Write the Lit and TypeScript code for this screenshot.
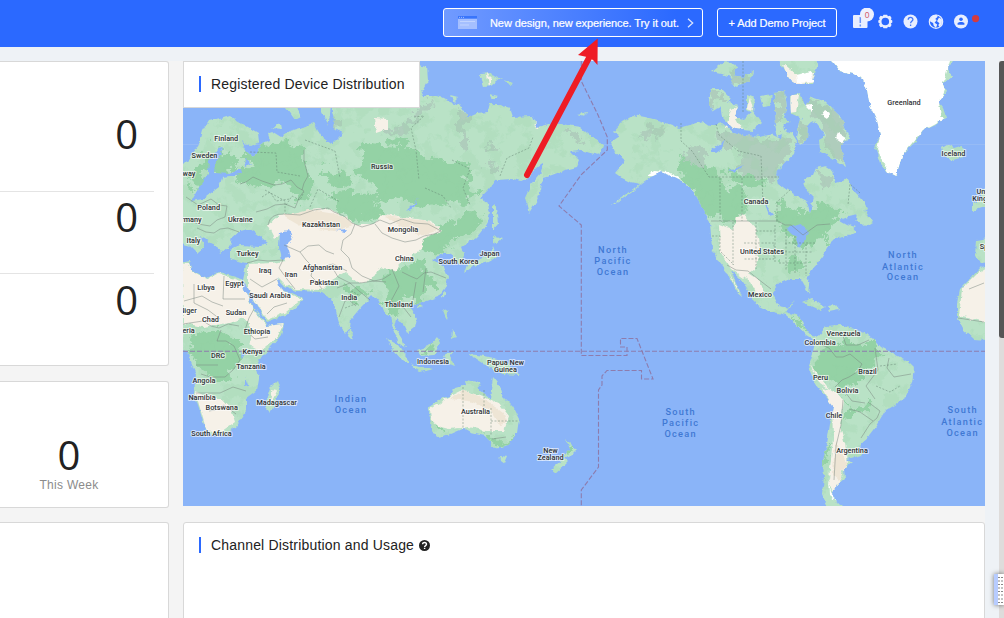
import { LitElement, html, css, svg } from "lit";
import { customElement, property } from "lit/decorators.js";

type Label = [string, number, number];

const COUNTRIES: Label[] = [
  ["Finland", 226.3, 140.7], ["Sweden", 204.5, 157.7], ["Norway", 183, 175.7],
  ["Poland", 208.7, 209.7], ["Germany", 187, 222], ["Ukraine", 240.3, 222],
  ["Italy", 193.5, 243.2], ["Turkey", 247.5, 256], ["Russia", 382, 169.3],
  ["Kazakhstan", 321, 226.8], ["Mongolia", 403, 231.7], ["China", 404.3, 261],
  ["South Korea", 458.5, 264], ["Japan", 489.5, 256], ["Iraq", 265, 273],
  ["Iran", 291, 277.3], ["Afghanistan", 322.5, 270], ["Pakistan", 324, 284.5],
  ["Libya", 206, 289.5], ["Egypt", 234.5, 286], ["Saudi Arabia", 270, 298.3],
  ["India", 349.3, 300], ["Thailand", 398.7, 307], ["Niger", 188, 313],
  ["Chad", 210.5, 321.5], ["Sudan", 236, 314.5], ["Nigeria", 183, 332.5],
  ["Ethiopia", 257, 334], ["DRC", 218, 358], ["Kenya", 252.5, 353.5],
  ["Tanzania", 251, 369], ["Angola", 204, 383], ["Namibia", 202, 400],
  ["Botswana", 221.7, 409.5], ["Madagascar", 276.7, 404.5],
  ["South Africa", 211.5, 436.3], ["Indonesia", 433, 364],
  ["Papua New", 505.5, 365], ["Guinea", 505.5, 372], ["Australia", 475.5, 413.5],
  ["New", 550.5, 452.5], ["Zealand", 550.5, 460], ["Greenland", 904, 105],
  ["Iceland", 953.5, 155.5], ["Canada", 756, 203.5], ["United States", 762, 254.3],
  ["Mexico", 760, 297.3], ["Venezuela", 843.5, 335.5], ["Colombia", 820, 345.3],
  ["Brazil", 867.5, 373.7], ["Peru", 820.5, 379.5], ["Bolivia", 847.5, 393.3],
  ["Chile", 834, 418.3], ["Argentina", 852, 452.7], ["United", 987, 193.5],
  ["Kingdom", 987, 201], ["Spain", 989, 248.5],
];

const OCEANS: Label[] = [
  ["North", 613, 253.3], ["Pacific", 613, 264], ["Ocean", 613, 275.3],
  ["North", 903, 258.3], ["Atlantic", 903, 269.5], ["Ocean", 903, 280.3],
  ["Indian", 351, 402], ["Ocean", 351, 412.5],
  ["South", 680.7, 415], ["Pacific", 680.7, 426], ["Ocean", 680.7, 437],
  ["South", 962.7, 413.3], ["Atlantic", 962.3, 425], ["Ocean", 962.7, 435.5],
];

const LAND = [
  /* Eurasia */
  "M180 168L190 158 200 142 203 131 209 121 220 118 230 115 236 120 248 127 258 133 259 142 251 146 242 142 247 151 254 157 259 148 261 144 270 140 268 134 273 132 281 137 290 131 304 127 314 123 318 131 323 139 330 144 336 138 330 128 322 112 322 90 340 80 420 88 424 96 438 96 450 102 460 105 468 117 477 113 488 112 490 104 497 104 510 108 513 117 532 116 537 127 549 124 561 124 580 127 592 137 603 145 600 155 590 153 581 150 571 151 580 160 577 167 565 170 552 175 543 178 541 190 537 200 529 213 525 197 531 184 541 172 543 163 536 168 528 178 521 181 513 179 495 180 488 190 480 198 488 203 490 213 487 224 477 237 467 243 461 247 464 255 461 265 455 261 451 253 443 253 437 257 433 260 444 267 448 277 446 286 438 297 424 302 410 306 417 318 415 327 407 333 404 326 397 318 395 327 402 338 405 347 398 343 393 329 390 316 383 312 379 302 373 295 362 306 351 319 350 328 345 334 339 322 335 307 332 299 322 292 296 291 284 286 277 278 281 290 292 293 303 298 299 305 288 314 267 322 259 309 249 290 243 280 245 271 246 263 238 261 230 258 230 250 239 246 260 247 268 242 260 236 253 234 243 235 235 240 229 246 221 253 218 246 211 243 205 238 200 236 205 247 198 253 191 246 180 243Z",
  /* Africa */
  "M180 263L190 261 192 270 206 278 218 272 232 276 242 279 244 289 254 309 264 321 267 326 284 324 281 335 272 346 262 356 256 366 259 378 257 390 246 398 246 411 237 426 225 435 209 435 204 425 199 408 194 393 196 374 190 360 187 352 180 350Z",
  "M270 388L278 380 280 386 275 404 270 413 266 407 267 397Z",
  /* Western Africa at the right edge */
  "M990 264L981 267 971 278 960 289 957 303 957 318 963 329 974 339 990 340Z",
  "M990 238L976 240 975 257 981 263 990 262Z",
  "M990 187L979 190 982 199 973 203 973 211 982 208 990 206Z",
  /* Greenland */
  "M828 52L832 61 840 71 853 74 863 79 867 90 870 106 877 121 880 135 875 148 880 163 888 172 896 176 903 154 915 142 922 131 937 124 946 117 943 108 938 102 947 91 943 84 952 76 948 68 953 61 954 52Z",
  "M942 147L947 144 954 147 961 145 966 152 962 158 952 161 944 157Z",
  /* North America */
  "M611 142L620 136 613 132 622 122 634 115 645 117 657 120 669 124 680 128 690 125 702 121 710 126 722 123 733 132 745 135 760 137 771 134 781 139 785 130 792 133 797 141 794 154 784 163 777 174 779 184 787 190 799 197 807 201 810 213 814 198 806 190 804 180 814 175 817 168 825 166 833 171 836 183 843 181 847 178 853 190 862 199 867 209 860 214 848 217 840 220 847 224 856 227 846 234 836 238 829 245 823 256 812 270 806 277 810 285 809 294 805 286 801 279 790 279 778 284 772 293 779 306 790 308 795 299 786 312 799 316 804 327 812 335 819 336 816 341 806 335 797 325 786 315 770 311 756 304 749 292 740 279 731 271 742 296 735 290 727 272 719 262 712 249 710 222 705 214 699 201 694 192 684 182 674 177 661 172 649 178 642 183 634 191 616 203 611 205 633 190 640 184 630 182 622 178 615 173 621 166 625 160 615 152Z",
  "M708 101L711 89 722 89 731 98 723 106 713 112ZM722 117L720 102 729 102 738 106 734 116 744 119 753 111 762 123 752 131 734 129ZM712 72L725 61 737 67 733 78 722 74ZM728 75L744 77 753 70 750 82 736 87ZM747 95L755 98 753 113 747 110ZM760 97L772 95 770 106 763 107ZM773 52L784 70 794 84 812 84 818 64 814 52ZM774 93L785 91 787 109 784 119 791 122 776 124ZM790 96L800 93 808 111 802 119 791 114ZM811 97L824 101 840 116 850 139 840 145 846 167 830 157 820 151 819 139 826 135 815 121 802 128 804 109Z",
  "M800 118L808 122 807 139 800 145 796 136ZM774 125L782 121 785 134 777 137Z",
  "M857 213L866 211 873 222 865 227 856 219ZM835 233L851 226 856 232 844 238Z",
  "M802 302L812 298 825 307 819 310ZM827 306L836 305 839 309 829 311Z",
  /* South America */
  "M817 336L826 326 839 325 857 330 872 337 881 347 894 354 906 360 914 368 912 383 905 398 895 405 885 411 876 426 867 438 860 444 862 455 847 459 852 463 844 469 845 478 837 485 832 494 836 502 845 507 828 508 822 494 824 478 823 461 827 444 830 424 833 407 823 394 815 384 808 366 813 351Z",
  /* Australia and New Zealand */
  "M429 407L441 399 450 396 455 388 466 385 465 380 479 382 480 390 490 398 493 377 500 386 503 397 513 407 519 419 517 433 507 446 492 448 485 435 471 432 464 428 450 434 437 437 433 431 428 413Z",
  "M500 455L508 456 505 463 501 460ZM566 439L573 446 577 449 569 457 561 459 570 449ZM564 459L567 462 555 473 551 470Z",
  /* Islands */
  "M386 338L398 345 410 362 404 362 392 349ZM410 364L423 367 433 369 420 372ZM417 350L429 346 437 337 440 343 434 355 420 356ZM443 356L455 350 450 356 455 366 447 363ZM468 354L485 356 502 360 520 375 503 374 490 368ZM442 308L448 312 447 320ZM452 330L457 337 451 339ZM350 329L354 334 352 340 348 336ZM418 305L422 307 417 309ZM443 292L446 294 443 299Z",
  "M493 236L503 239 497 244 493 243ZM493 246L497 257 488 262 474 266 464 273 467 265 480 258 491 254ZM493 204L496 207 498 224 493 230Z",
  "M480 74L491 73 495 79 502 77 492 85 484 86ZM489 94L497 96 492 99ZM503 80L513 83 509 86ZM450 96L458 98 454 102ZM578 114L587 112 585 116Z",
  "M415 64L427 66 428 80 423 90 415 92ZM284 104L296 106 301 117 295 120ZM272 128L280 124 281 129Z",
];

const FOREST = [
  "M186 180L198 164 211 147 223 151 219 164 205 176 199 190 191 189ZM216 158L230 155 237 164 226 176 216 174ZM239 150L262 145 290 143 304 149 304 167 316 181 303 205 285 181 264 185 243 184 236 176 252 165Z",
  "M365 142L405 144 422 157 450 162 473 165 465 178 475 190 463 207 438 202 416 204 398 197 382 207 372 186 354 175Z",
  "M407 241L435 230 458 221 468 210 482 218 472 230 454 242 432 252ZM384 270L400 266 426 264 436 284 424 298 405 298 394 316 383 300Z",
  "M188 354L196 333 218 329 229 342 239 339 240 370 226 380 208 377 192 365ZM340 288L355 285 370 293 355 302Z",
  "M679 155L705 163 721 181 747 193 748 220 717 221 703 211 693 194 681 183ZM778 203L807 211 832 205 846 214 827 229 820 242 805 250 788 240 778 223ZM722 170L760 176 764 185 733 181Z",
  "M816 350L835 342 856 345 876 345 884 354 873 367 862 376 849 387 828 382 817 370ZM843 398L850 407 872 404 871 411 846 415ZM430 345L436 343 434 353 420 354Z",
  "M483 435L503 443 515 433 508 445 491 447ZM434 423L447 430 435 435ZM824 440L829 442 828 465 822 474ZM562 448L575 447 566 456ZM789 310L800 319 807 332 799 326Z",
  "M322 168L345 172 352 182 338 188 326 182ZM330 196L352 190 374 196 384 210 372 222 352 220 338 208ZM785 262L800 256 806 264 800 274 788 272Z",
];

const ARID = [
  "M268 225L278 216 296 214 310 210 327 208 342 215 355 224 374 224 381 215 402 217 432 221 441 231 423 239 421 250 402 262 394 271 379 268 372 280 358 283 345 272 333 279 322 290 296 289 286 285 278 277 282 290 302 299 286 312 268 320 259 308 248 288 248 264 272 263 285 261 283 245 286 230 275 239Z",
  "M182 264L190 263 192 271 207 279 218 273 241 281 253 309 266 326 284 323 277 338 261 351 249 345 254 331 244 318 229 323 203 327 183 323Z",
  "M195 391L205 396 222 399 231 409 235 422 222 431 207 432ZM272 390L277 391 269 407Z",
  "M989 266L979 272 962 289 959 316 989 323Z",
  "M430 409L445 399 463 390 486 398 499 403 509 416 504 431 486 431 469 427 450 429 438 426 431 420Z",
  "M719 224L733 229 736 217 744 215 756 229 760 249 755 269 744 278 731 269 720 253ZM743 270L760 281 766 298 755 292ZM729 272L740 294 735 287ZM731 110L744 102 747 112 736 119 742 130 725 128ZM750 97L753 110 747 108ZM783 63L797 75 814 74 817 82 789 86ZM791 95L799 95 796 112 789 113Z",
  "M822 388L836 392 844 401 840 426 845 444 848 462 840 478 841 488 833 495 829 480 833 438 832 408ZM809 362L818 376 829 390 820 384Z",
  "M374 118L388 119 388 129 376 133ZM534 126L536 121 540 129ZM487 73L492 78 489 87Z",
];

const TUNDRA = [
  "M717 129L738 132 761 138 783 138 793 141 786 158 778 174 772 179 741 175 740 155 720 144ZM641 131L656 127 671 128 655 136 637 140ZM680 155L701 151 708 163 701 169ZM817 169L833 173 834 184 818 186ZM804 100L825 102 845 120 850 142 846 164 822 152 830 136 815 120ZM709 90L728 98 712 109ZM728 75L750 72 748 84 736 87ZM774 93L785 91 787 109 784 119 776 124ZM796 118L808 122 807 139 800 145Z",
  "M460 111L468 117 464 132 468 150 460 147ZM382 132L400 127 415 109 437 98 416 119 401 140ZM489 164L499 167 493 171 486 170ZM566 128L584 138 583 147 569 135ZM484 137L500 155 492 151ZM330 113L340 130 333 137Z",
];

const BORDERS =
  "M268 225Q270 213 285 214L300 215 314 210 328 208 334 212 344 216 352 223 362 227 372 224 380 220 390 224 402 219 414 223 428 224 441 231M375 224L382 233 392 238 405 242 416 240 424 236 434 234 441 231M355 224L351 234 343 240 341 250 349 258 352 268 362 276 374 281 386 282M284 245L300 252 308 246 319 245 326 251 334 254M300 252L306 260 313 267 322 267 333 264 347 271M247 263L258 260 268 261 283 260 279 268 287 279 295 289M313 267L311 276 316 281 322 289M250 279L262 287 277 279M267 314L274 307 287 303M224 276L223 299H245M194 284V303L208 310 220 319M184 301L202 296 212 302 223 306M183 324L203 321 211 326 219 328 228 324 239 326M254 309L249 318 245 330 255 339 268 337M221 330L217 341 226 341 234 346 240 360 233 370 225 377 210 377 201 374M196 365L218 365M196 393H220L233 387 246 391M209 411L215 410 224 405 236 414M186 197L198 205 211 199 219 205 227 206 225 217 217 220 210 226 198 224 188 220M197 228L206 232 214 233 220 229 228 228 239 232M240 184L246 182 253 177 262 181 274 185 282 184 291 180 297 187 304 191 299 198 295 208 285 204 275 205 267 209 256 212M304 150L304 160 308 176 304 183 302 190M332 267L338 277 350 283 360 283 374 281 383 279 391 274M337 288L350 283 359 291 370 300M356 306L349 300 345 301 342 309 339 317M392 269L399 286 391 301 404 308 411 317M402 272L410 276 417 279 424 273 431 272 446 278M416 282L413 300M426 268L423 292M711 221H778L785 225 791 225 803 235 817 225 830 224M727 265L736 270 748 271 758 279 771 289M822 345L829 348 836 357 843 357 850 354 862 364 857 372 849 377 842 380 835 387M842 333L846 345 858 345 869 340M838 389L845 392 852 401 865 403M868 402L880 411 877 418 870 424 861 438M843 400L841 425 836 446 834 480M849 409L860 412 873 421M875 348L878 370 866 386 875 399M889 358L887 368 894 377 911 374M969 289L984 283M958 318L984 322M492 439L506 437";

const STATES =
  "M681 123V141L692 151 709 177H779M720 178V221M742 178V221M762 178L763 205M716 124L719 135 738 151 761 156 762 178M743 61V113M777 221V202L790 190M756 222V269M712 236H720V251L734 265M733 222V265M744 243H774V259H744M756 231H775M775 225V263M786 229V270M795 236V274M806 244V276M463 387V428M484 390V408M491 408V435M491 421H518M785 243H815M778 252H812M779 263H807M305 140L335 151 340 178M414 117L424 116 411 128 416 150 419 180M452 160L470 169 463 188 470 205M500 176L507 158 529 148 533 137M265 190L285 201 285 213M310 207L318 189 340 202M425 188L443 196 451 208M860 193L850 184 848 205M250 152L276 153 277 172 300 176M262 197L270 192 276 201 290 199M286 205L292 196 300 200 304 192M345 300L352 291 360 296M345 308L358 303M880 366L897 364M876 386L890 392 900 386";

@customElement("world-map")
export class WorldMap extends LitElement {
  static styles = css`
    :host { display: block; }
    svg { display: block; width: 802px; height: 445px; background: #8ab4f8; }
    .country {
      font: 500 7.3px Roboto, sans-serif; fill: #303336; stroke: #fff; stroke-width: 2.2px;
      stroke-opacity: .6; paint-order: stroke; stroke-linejoin: round; text-anchor: middle;
    }
    .ocean {
      font: 500 9.2px Roboto, sans-serif; fill: #3f78d3; letter-spacing: 1.3px; text-anchor: middle;
    }
  `;
  render() {
    return html`<svg viewBox="183 61 802 445">
      <defs>
        <filter id="coast" filterUnits="userSpaceOnUse" x="170" y="40" width="830" height="480">
          <feTurbulence type="fractalNoise" baseFrequency=".16" numOctaves="3" seed="5" result="n"></feTurbulence>
          <feDisplacementMap in="SourceGraphic" in2="n" scale="5" xChannelSelector="R" yChannelSelector="G"></feDisplacementMap>
        </filter>
        <filter id="patch" filterUnits="userSpaceOnUse" x="170" y="40" width="830" height="480">
          <feTurbulence type="fractalNoise" baseFrequency=".09" numOctaves="4" seed="9" result="n"></feTurbulence>
          <feDisplacementMap in="SourceGraphic" in2="n" scale="24" xChannelSelector="R" yChannelSelector="G"></feDisplacementMap>
        </filter>
        <filter id="speckle" filterUnits="userSpaceOnUse" x="170" y="40" width="830" height="480">
          <feTurbulence type="fractalNoise" baseFrequency=".06" numOctaves="5" seed="14"></feTurbulence>
          <feColorMatrix values="0 0 0 0 .3  0 0 0 0 .64  0 0 0 0 .38  12 0 0 0 -6.2"></feColorMatrix>
        </filter>
        <clipPath id="land">${LAND.map((d) => svg`<path d=${d}></path>`)}</clipPath>
      </defs>
      <path d="M183 144.500H985" stroke="#9dbff5" stroke-width=".6"></path>
      <g filter="url(#coast)">
        ${LAND.map((d) => svg`<path d=${d} fill="#b9e2c6"></path>`)}
        <g clip-path="url(#land)">
          <g filter="url(#patch)">
            ${FOREST.map((d) => svg`<path d=${d} fill="#94d2a5"></path>`)}
            ${TUNDRA.map((d) => svg`<path d=${d} fill="#afcdbc"></path>`)}
          </g>
          <rect x="183" y="61" width="802" height="445" filter="url(#speckle)" opacity=".2"></rect>
          ${ARID.map((d) => svg`<path d=${d} fill="#f6f1e8"></path>`)}
          <path fill="#eee5d5" d="M283 216L310 210 342 215 353 225 335 231 302 227ZM384 216L430 221 439 230 420 236 400 226ZM450 399L464 390 486 400 507 416 501 427 490 410 470 401ZM835 440L847 462 839 480 833 475Z"></path>
          <path fill="#fff" d="M828 50L832 61 840 71 853 74 863 79 868 106 880 135 877 150 888 172 896 176 903 154 922 131 944 119 939 105 945 90 943 84 950 61 954 50Z"></path>
          <path fill="#fff" d="M647 176L654 171 668 172 681 179 695 193 696 196 684 186 668 177ZM796 75L811 72 814 82 797 83ZM825 110L830 113 827 119 821 115ZM838 133L847 139 843 143 836 138ZM828 478L831 492 837 502 829 495ZM805 105L812 104 812 112Z"></path>
        </g>
      </g>
      <g fill="#8ab4f8" filter="url(#coast)">
        <path d="M201 184L208 174 209 161 218 149 224 148 216 161 215 173 229 174 241 169 242 173 230 177 222 178 219 187 203 199 191 201Z"></path>
        <path d="M230 240L240 231 249 229 264 239 267 245 248 243 235 248ZM280 232L289 230 293 239 287 245 291 258 282 259 279 247Z"></path>
        <path d="M331 106L335 118 333 128 343 133 333 143 327 142 328 129ZM406 211L416 201 418 197 414 208ZM336 230L347 229 345 232ZM711 150L724 141 722 149 716 153ZM729 171L744 165 735 173ZM765 204L773 214 769 215ZM786 228L801 224 809 234 799 248 795 236ZM240 352L245 354 242 359ZM245 377L248 385 245 386ZM244 157L251 164 246 167Z"></path>
      </g>
      <path d=${BORDERS} fill="none" stroke="#78857f" stroke-opacity=".7" stroke-width=".7"></path>
      <path d=${STATES} fill="none" stroke="#5f7b6c" stroke-opacity=".65" stroke-width=".7" stroke-dasharray="2 1.500"></path>
      <path fill="none" stroke="#8d7cad" stroke-width="1.100" stroke-dasharray="5 2" d="M183 351.300H985M581.300 61V81L598 115 607.300 137V150L581 175 559 206 581.300 225V355.500H627V347H620.500V338.500H637L653 379H641.500V370.500H607L602 376V385L598.500 390V467L581.300 490V506"></path>
      ${COUNTRIES.map(([t, x, y]) => svg`<text class="country" x=${x} y=${y}>${t}</text>`)}
      ${OCEANS.map(([t, x, y]) => svg`<text class="ocean" x=${x} y=${y}>${t}</text>`)}
    </svg>`;
  }
}

@customElement("section-title")
export class SectionTitle extends LitElement {
  @property() text = "";
  static styles = css`
    :host { display: flex; align-items: center; height: 45px; padding-left: 15px; box-sizing: border-box; }
    .bar { width: 2px; height: 16px; background: #2b69ff; margin-right: 10px; }
    .label { font: 14px "Liberation Sans", Arial, sans-serif; letter-spacing: .18px; color: #222; white-space: nowrap; }
  `;
  render() {
    return html`<span class="bar"></span><span class="label">${this.text}</span><slot></slot>`;
  }
}

@customElement("app-root")
export class AppRoot extends LitElement {
  static styles = css`
    :host {
      display: block; position: relative; width: 1004px; height: 618px; overflow: hidden;
      background: #eef2f6; font-family: "Liberation Sans", Arial, sans-serif;
    }
    * { box-sizing: border-box; }
    header { height: 47px; background: #2b69ff; display: flex; padding: 8px 0 0 443px; color: #fff; }
    .btn {
      height: 29px; border: 1px solid #fff; border-radius: 3px; display: flex; align-items: center;
      font-size: 11px; white-space: nowrap; -webkit-text-stroke: .2px #fff;
    }
    .try { width: 260px; background: linear-gradient(90deg, #719bff, #2b69ff 90%); padding-left: 14px; letter-spacing: -.08px; }
    .try span { margin: 1px 8px 0 13px; width: 189px; }
    .add { width: 120px; margin-left: 14px; justify-content: center; padding-top: 1px; letter-spacing: -.06px; }
    .icons { width: 130px; height: 29px; margin-left: 14px; }
    .badge { font: 8.5px "Liberation Sans", Arial, sans-serif; fill: #d45c6a; text-anchor: middle; }
    .body { display: flex; margin-top: 14px; height: 557px; }
    .content { width: 985px; display: flex; gap: 14px; background: #f4f4f4; }
    .left { width: 169px; display: flex; flex-direction: column; }
    .right { width: 802px; display: flex; flex-direction: column; gap: 16px; }
    .card { background: #fff; border: 1px solid #d8d8d8; border-radius: 3px; flex-shrink: 0; }
    .left .card { border-left: 0; border-radius: 0 3px 3px 0; }
    .stats { height: 305px; padding: 46px 14px 0 0; }
    .stat { height: 84px; border-bottom: 1px solid #e4e4e4; text-align: right; padding-right: 16px; }
    .stat + .stat { height: 82px; }
    .stat + .stat .num { line-height: 50px; }
    .stat:last-child { border: 0; }
    .stat:last-child .num { line-height: 52px; }
    .num { font: 40px/52px "Open Sans", sans-serif; color: #222; }
    .week { height: 127px; margin-top: 15px; padding: 50px 30px 0 0; text-align: center; font-size: 12px; color: #8b8b8b; }
    .week .num { line-height: 46px; }
    .week .label { letter-spacing: .3px; }
    .more { height: 110px; margin-top: 14px; }
    .map { position: relative; height: 445px; flex-shrink: 0; }
    .map section-title {
      position: absolute; left: 0; top: 0; width: 237px; height: 47px; padding-bottom: 1px;
      background: #fff; border: 1px solid #d8d8d8;
    }
    .channel { height: 110px; }
    .channel section-title { height: 44px; }
    .help { margin-left: 5px; }
    .scroll { margin-left: 14px; width: 5px; background: #dedcdb; }
    .thumb { height: 277px; background: #565656; border-radius: 3px 0 0 3px; }
    .widget {
      position: absolute; left: 994px; top: 574px; width: 10px; height: 31px; overflow: hidden;
      background: #fff; border-left: 4px solid #b7ccff; box-shadow: 0 0 5px #0008;
    }
    .arrow { position: absolute; left: 515px; top: 35px; }
  `;
  render() {
    return html`
      <header>
        <div class="btn try">
          <svg width="19" height="13" viewBox="0 0 19 13"><path fill="#a5bfff" d="M0 0h19v13H0z"></path><path fill="#3975fb" d="M0 0h19v2.700H0z"></path><path d="M2 5.500h15M2 9h9" stroke="#c2d4ff"></path><path d="M1 1.400h5" stroke="#bdd0ff" stroke-width=".8" stroke-dasharray="1 1"></path></svg>
          <span>New design, new experience. Try it out.</span>
          <svg width="7" height="10" viewBox="0 0 7 10"><path d="M1 .8L5.700 5 1 9.200" fill="none" stroke="#d8e3ff" stroke-width="1.300"></path></svg>
        </div>
        <div class="btn add">+ Add Demo Project</div>
        <svg class="icons" viewBox="851 8 130 29">
          <rect x="853" y="15" width="14.500" height="13" rx="1" fill="#e8eeff"></rect>
          <path d="M860.300 17v6M860.300 24.500v2" stroke="#6b94f8" stroke-width="1.500"></path>
          <circle cx="867" cy="14.500" r="7" fill="#edf1ff"></circle>
          <text class="badge" x="867" y="17.500">0</text>
          <path fill="#e8eeff" fill-rule="evenodd" transform="translate(885.300 21.500)" d="M-1.800-6.800H1.800L2.600-5.300 4.800-5.800 6.300-3.600 5.500-2 7-1V1L5.500 2 6.300 3.600 4.800 5.800 2.600 5.300 1.800 6.800H-1.800L-2.600 5.300-4.800 5.800-6.300 3.600-5.500 2-7 1V-1L-5.500-2-6.300-3.600-4.800-5.800-2.600-5.300ZM3.800 0A3.800 3.800 0 1 0-3.800 0 3.800 3.800 0 1 0 3.800 0Z"></path>
          <circle cx="910.500" cy="21.500" r="7" fill="#e8eeff"></circle>
          <path d="M908.200 19.800c0-3.200 4.800-3.100 4.700-.2 0 1.700-2.300 1.800-2.300 3.600M910.600 24.400v1.500" fill="none" stroke="#4077fa" stroke-width="1.300"></path>
          <circle cx="936" cy="21.700" r="6.700" fill="none" stroke="#e8eeff" stroke-width="1.200"></circle>
          <path fill="#e8eeff" d="M930 19l3-3.700 3.500-.6 1.200 2-2.500 2.200 1.600 1.200-2.200 2.600 2.600 1.800-1.200 3.500-2.400-2.500-.5-2.600-3-1.500ZM939 17.500l3 2-.2 5-2.500 2.500-1-2 1.200-1.800-2.500-2Z"></path>
          <circle cx="961" cy="21.500" r="7" fill="#e8eeff"></circle>
          <circle cx="961" cy="19.200" r="1.800" fill="#2b69ff"></circle>
          <path fill="#2b69ff" d="M957.600 24.800v-1.300c0-2 6.800-2 6.800 0v1.300Z"></path>
          <circle cx="975.600" cy="18.600" r="3.600" fill="#d33b40"></circle>
        </svg>
      </header>
      <div class="body">
        <div class="content">
          <div class="left">
            <div class="card stats">
              ${["0", "0", "0"].map((n) => html`<div class="stat"><div class="num">${n}</div></div>`)}
            </div>
            <div class="card week"><div class="num">0</div><div class="label">This Week</div></div>
            <div class="card more"></div>
          </div>
          <div class="right">
            <div class="map">
              <world-map></world-map>
              <section-title text="Registered Device Distribution"></section-title>
            </div>
            <div class="card channel">
              <section-title text="Channel Distribution and Usage">
                <svg class="help" width="11" height="11" viewBox="0 0 11 11"><circle cx="5.500" cy="5.500" r="5.500" fill="#222"></circle><path d="M3.600 4.200c0-2.400 3.900-2.300 3.900 0 0 1.400-1.900 1.300-1.900 2.700M5.600 7.700v1.400" fill="none" stroke="#fff" stroke-width="1.400"></path></svg>
              </section-title>
            </div>
          </div>
        </div>
        <div class="scroll"><div class="thumb"></div></div>
      </div>
      <div class="widget">
        <svg width="6" height="31" viewBox="0 0 6 31"><path d="M0 3.500h6M0 7h6M0 10.500h6M0 14h6M0 17.500h6M0 21h6M0 25h6M0 28.500h6" stroke="#888" stroke-width="1" stroke-dasharray="2 1"></path></svg>
      </div>
      <svg class="arrow" width="90" height="150" viewBox="515 35 90 150">
        <path d="M527 175L590 56" stroke="#ee1c25" stroke-width="6" stroke-linecap="round"></path>
        <path d="M597.700 38.500L578 55 587 57 593 60 597.500 65Z" fill="#ee1c25"></path>
      </svg>
    `;
  }
}
